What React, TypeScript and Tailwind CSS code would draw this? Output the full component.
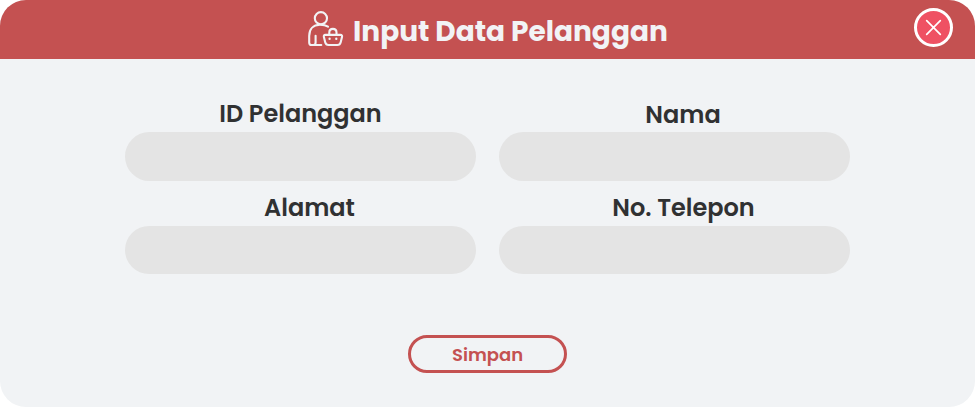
import React from "react";

function CustomerIcon() {
  return (
    <svg
      className="block h-[38px] w-[37px] shrink-0"
      viewBox="307 9 37 38"
      fill="none"
      stroke="#f2f3f5"
      strokeWidth="2.1"
      strokeLinecap="round"
      strokeLinejoin="round"
      aria-hidden="true"
    >
      <circle cx="320.9" cy="18.2" r="6.1" />
      <path d="M328 26.6C325.8 25.2 323.4 24.8 320 24.8C313 24.8 309.2 29.4 309.2 36V42.4C309.2 44.2 310 45 311.6 45H321.3" />
      <path d="M315.6 35.8V42.4C315.6 44.2 314.8 45 313.2 45" />
      <path d="M325.4 34.9H340.4C342 34.9 342.3 35.8 342 37L340.7 42.2C340.2 44.2 339.3 45 337.4 45H328.6C326.7 45 325.7 44.2 325.2 42.2L323.9 37C323.6 35.8 323.9 34.9 325.4 34.9Z" />
      <path d="M329.3 34.4V32.5C329.3 30.2 330.6 28.9 332.9 28.9C335.2 28.9 336.5 30.2 336.5 32.5V34.4" />
      <path d="M329.6 38.7V38.9M336.3 38.7V38.9" strokeWidth="2.3" />
    </svg>
  );
}

type FieldProps = { id: string; label: string; labelClass: string };

function Field({ id, label, labelClass }: FieldProps) {
  return (
    <div className="flex flex-col">
      <label
        htmlFor={id}
        className={`block h-[37px] text-center text-2xl font-semibold whitespace-nowrap text-[#303132] ${labelClass}`}
      >
        {label}
      </label>
      <input id={id} className="h-[48.5px] w-full rounded-full bg-[#e4e4e4] px-6 outline-none" />
    </div>
  );
}

export default function App() {
  return (
    <main className="flex h-[407px] w-[975px] flex-col overflow-hidden rounded-[26px] bg-[#f1f3f5] font-[Poppins,Inter,sans-serif]">
      <header className="flex h-[58.5px] shrink-0 items-start bg-[#c45151] pl-[307px] pr-[22px]">
        <div className="pt-[9px]">
          <CustomerIcon />
        </div>
        <h1 className="ml-[9px] text-[28px] leading-[63px] font-bold whitespace-nowrap text-[#f2f3f5]">
          Input Data Pelanggan
        </h1>
        <button
          aria-label="Tutup"
          className="mt-2 ml-auto flex size-[39px] items-center justify-center rounded-full border-3 border-white bg-[#ef5163]"
        >
          <svg className="size-[17px]" viewBox="0 0 17 17" stroke="white" strokeWidth="1.7" strokeLinecap="round">
            <path d="M1.7 1.7L15.3 15.3M15.3 1.7L1.7 15.3" />
          </svg>
        </button>
      </header>
      <form className="flex flex-col items-center pt-[36.5px]" onSubmit={(e) => e.preventDefault()}>
        <div className="grid grid-cols-[351px_351px] gap-x-[23px] gap-y-2">
          <Field id="id" label="ID Pelanggan" labelClass="leading-[37px]" />
          <Field id="nama" label="Nama" labelClass="leading-[39px] pl-[17px]" />
          <Field id="alamat" label="Alamat" labelClass="leading-[37px] pl-[18px]" />
          <Field id="telepon" label="No. Telepon" labelClass="leading-[37px] pl-[18px]" />
        </div>
        <button className="mt-[61px] h-[38px] w-[159px] rounded-full border-3 border-[#c45151] pt-px text-[18px] leading-[32px] font-semibold text-[#c45151]">
          Simpan
        </button>
      </form>
    </main>
  );
}
